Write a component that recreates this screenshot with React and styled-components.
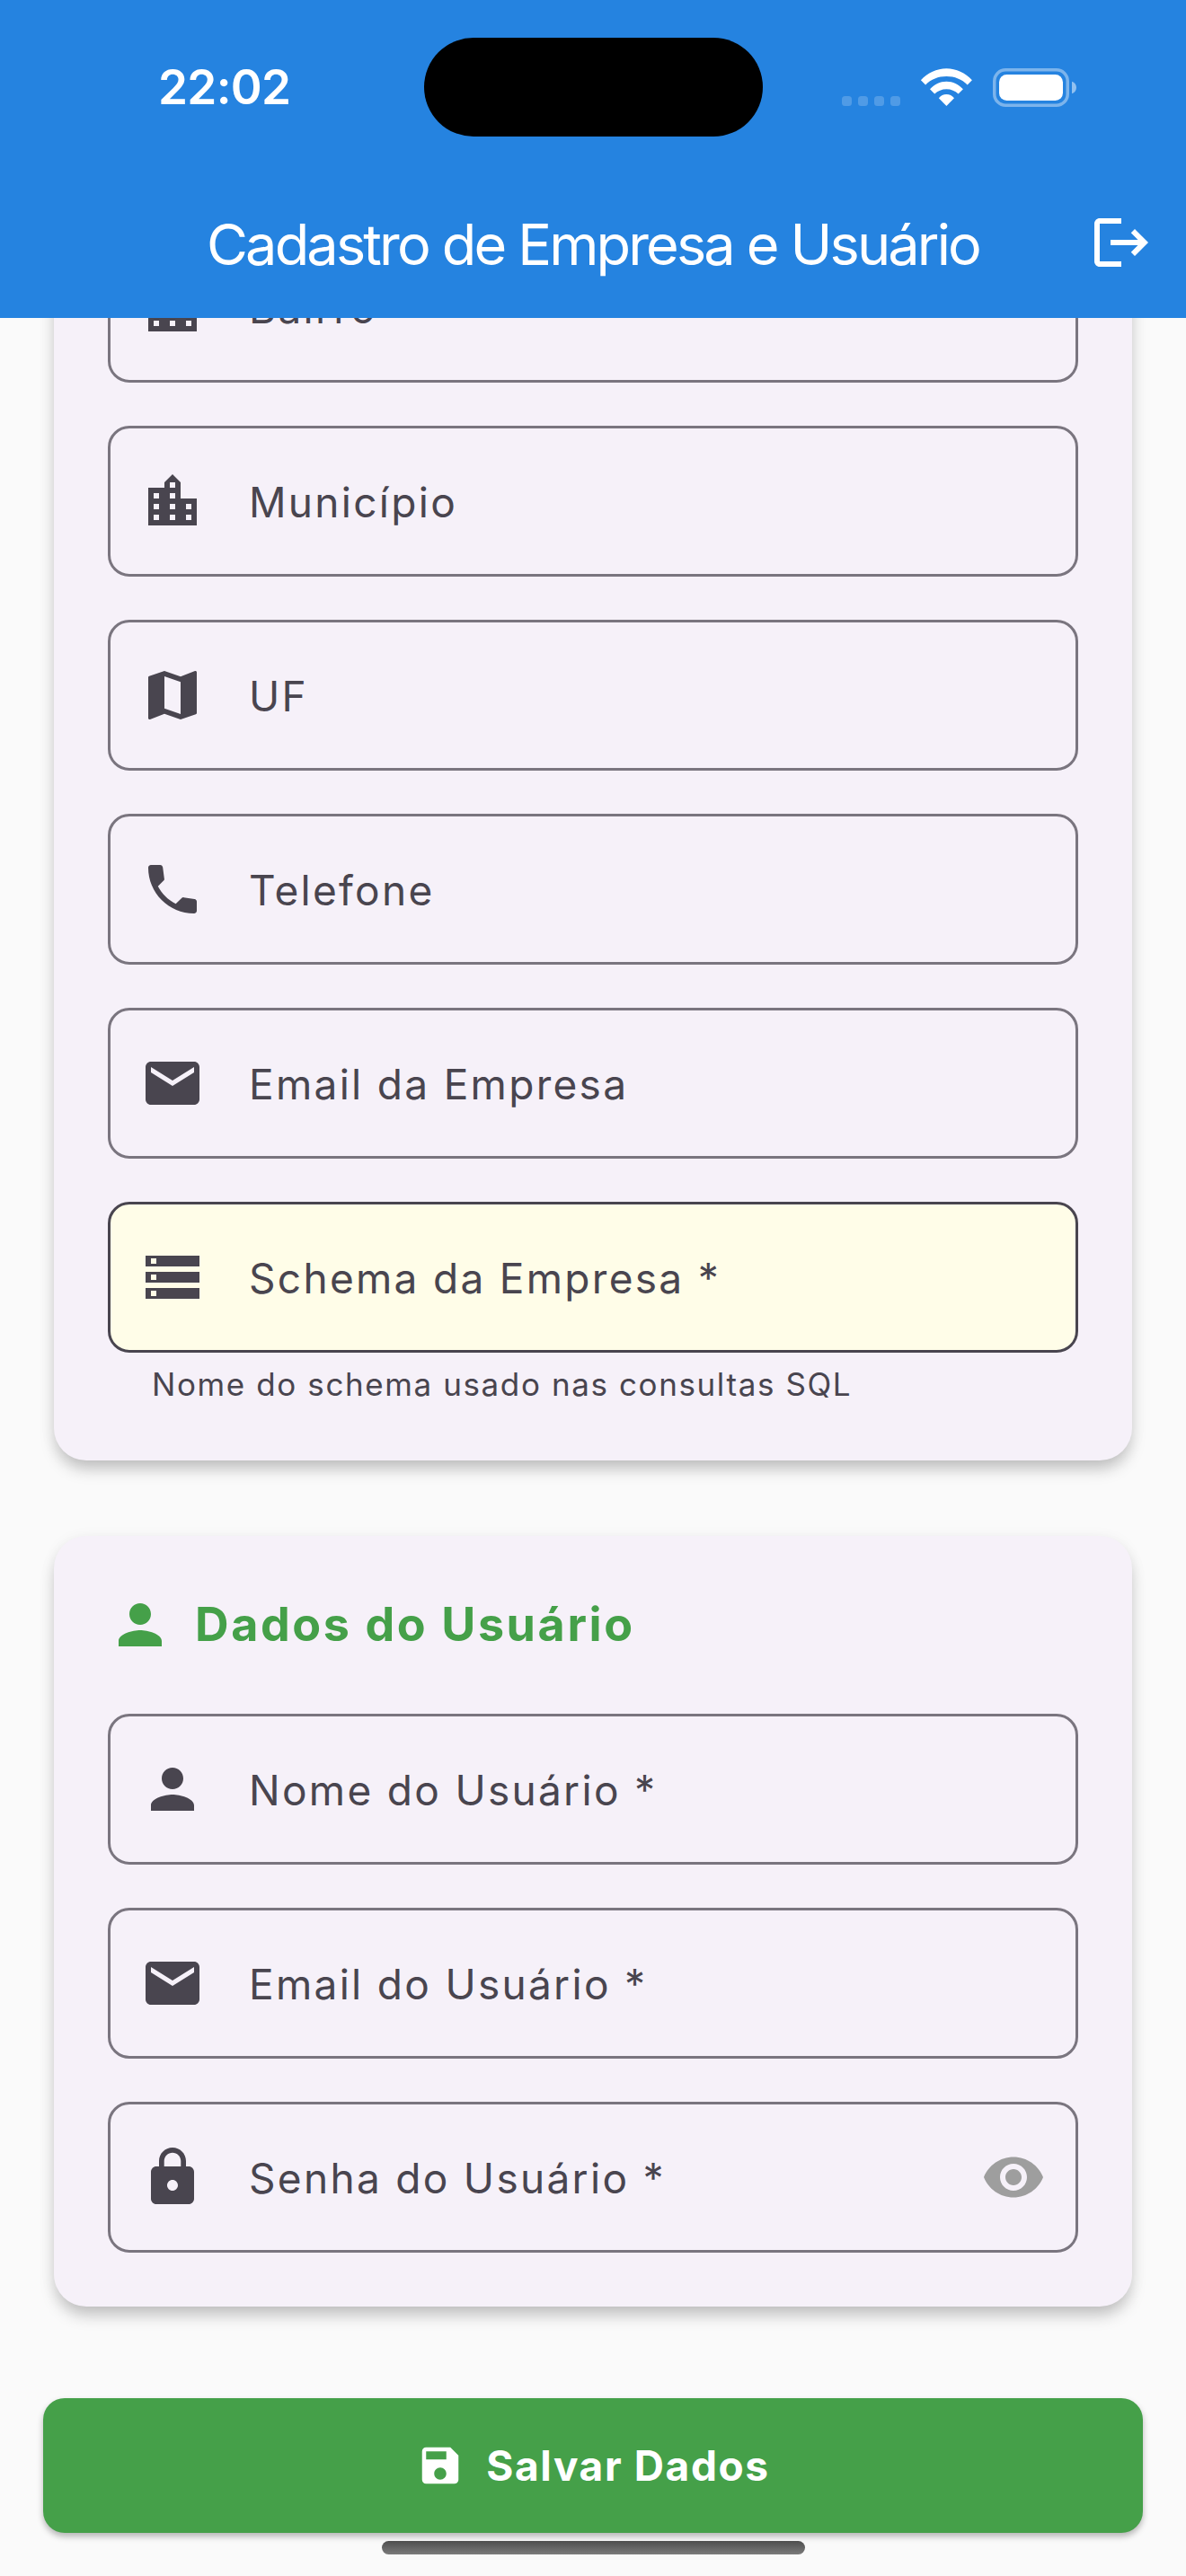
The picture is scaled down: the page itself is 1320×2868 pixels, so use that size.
import React from "react";
import styled, { createGlobalStyle } from "styled-components";

const GlobalStyle = createGlobalStyle`
  *, *::before, *::after { box-sizing: border-box; }
  html, body { margin: 0; padding: 0; }
  body {
    background: #fafafa;
    font-family: Inter, Roboto, "Liberation Sans", sans-serif;
    -webkit-font-smoothing: antialiased;
  }
`;

const Screen = styled.div`
  position: relative;
  width: 1320px;
  height: 2868px;
  display: flex;
  flex-direction: column;
  overflow: hidden;
  background: #fafafa;
`;

const Header = styled.header`
  flex: none;
  height: 354px;
  display: flex;
  flex-direction: column;
  background: #2583e0;
  color: #fff;
`;

const StatusBar = styled.div`
  height: 186px;
  padding: 8px 121px 0 176px;
  display: flex;
  align-items: center;
  justify-content: space-between;
`;

const Clock = styled.span`
  font-size: 53px;
  line-height: 60px;
  font-weight: 600;
  letter-spacing: -0.7px;
`;

const Island = styled.div`
  position: absolute;
  top: 42px;
  left: 472px;
  width: 377px;
  height: 110px;
  border-radius: 55px;
  background: #000;
`;

const StatusIcons = styled.div`
  display: flex;
  align-items: flex-end;
  height: 43px;
`;

const SignalDots = styled.div`
  display: flex;
  gap: 7px;
  margin: 0 22px 1px 0;
`;

const Dot = styled.i`
  width: 11px;
  height: 11px;
  border-radius: 3.5px;
  background: rgba(255, 255, 255, 0.2);
`;

const WifiGlyph = styled.svg`
  width: 59px;
  height: 43px;
  margin-right: 22px;
`;

const BatteryGlyph = styled.svg`
  width: 94px;
  height: 43px;
`;

const AppBar = styled.div`
  height: 168px;
  padding: 0 36px;
  display: grid;
  grid-template-columns: 72px 1fr 72px;
  align-items: center;
`;

const AppTitle = styled.h1`
  grid-column: 2;
  margin: 0;
  padding-top: 3px;
  text-align: center;
  white-space: nowrap;
  font-size: 63px;
  line-height: 84px;
  font-weight: 400;
  letter-spacing: -2.85px;
`;

const Glyph = styled.svg`
  flex: none;
  display: block;
  width: ${(p) => p.$size || 72}px;
  height: ${(p) => p.$size || 72}px;
  fill: ${(p) => p.$color || "currentColor"};
`;

const FormViewport = styled.main`
  flex: none;
  height: 2286px;
  padding: 0 60px 72px;
  display: flex;
  flex-direction: column;
  justify-content: flex-end;
  gap: 84px;
  overflow: hidden;
`;

const Card = styled.section`
  flex: none;
  padding: 60px;
  display: flex;
  flex-direction: column;
  gap: 48px;
  border-radius: 36px;
  background: #f6f1f9;
  box-shadow: 0 12px 18px -3px rgba(0, 0, 0, 0.22), 0 3px 18px rgba(0, 0, 0, 0.06);
`;

const CardHeading = styled.div`
  height: 78px;
  margin-bottom: 12px;
  display: flex;
  align-items: center;
  gap: 25px;
  color: #45a049;
`;

const CardTitle = styled.h2`
  margin: 0;
  font-size: 52px;
  line-height: 66px;
  font-weight: 700;
  white-space: nowrap;
  letter-spacing: 2.6px;
`;

const FieldBox = styled.label`
  height: 168px;
  padding: 0 33px;
  display: flex;
  align-items: center;
  border: 3px solid ${(p) => (p.$active ? "#49454f" : "#7a757f")};
  border-radius: 24px;
  background: ${(p) => (p.$active ? "#fffde8" : "transparent")};
  color: #49454f;
`;

const FieldLabel = styled.span`
  flex: 1;
  padding: 2px 0 0 49px;
  font-size: 46px;
  line-height: 60px;
  white-space: nowrap;
  letter-spacing: 2.3px;
`;

const FieldGroup = styled.div`
  height: 228px;
`;

const Helper = styled.p`
  margin: 0;
  padding: 13px 49px 0;
  color: #49454f;
  font-size: 35px;
  line-height: 44px;
  letter-spacing: 1.6px;
`;

const SaveDock = styled.footer`
  flex: 1;
  padding: 30px 48px 0;
  display: flex;
  flex-direction: column;
  align-items: center;
`;

const SaveButton = styled.button`
  width: 100%;
  height: 150px;
  padding: 0;
  display: flex;
  align-items: center;
  justify-content: center;
  gap: 24px;
  border: 0;
  border-radius: 24px;
  background: #45a049;
  color: #fff;
  font: 700 46px/60px Inter, Roboto, "Liberation Sans", sans-serif;
  letter-spacing: 1.6px;
  box-shadow: 0 4px 7px rgba(0, 0, 0, 0.28);
`;

const HomeIndicator = styled.div`
  width: 471px;
  height: 15px;
  margin-top: 9px;
  border-radius: 8px;
  background: linear-gradient(#4e4e4e, #7b7b7b);
`;

const paths = {
  city: "M15 11V5l-3-3-3 3v2H3v14h18V11h-6zm-8 8H5v-2h2v2zm0-4H5v-2h2v2zm0-4H5V9h2v2zm6 8h-2v-2h2v2zm0-4h-2v-2h2v2zm0-4h-2V9h2v2zm0-4h-2V5h2v2zm6 12h-2v-2h2v2zm0-4h-2v-2h2v2z",
  map: "M20.5 3l-.16.03L15 5.1 9 3 3.36 4.9c-.21.07-.36.25-.36.48V20.5c0 .28.22.5.5.5l.16-.03L9 18.9l6 2.1 5.64-1.9c.21-.07.36-.25.36-.48V3.5c0-.28-.22-.5-.5-.5zM15 19l-6-2.11V5l6 2.11V19z",
  phone: "M4 3C3.450 3 3 3.450 3 4 3 13.390 10.610 21 20 21c.550 0 1-.450 1-1v-3.400c0-.500-.350-.900-.850-.950L16.200 15.050c-.350-.050-.550 0-.750.200L13.200 17.400C10.400 15.950 8.050 13.700 6.600 10.900L8.750 8.750c.200-.200.250-.400.200-.700L8.400 3.900C8.330 3.400 7.950 3 7.400 3z",
  mail: "M20 4H4c-1.1 0-2 .9-2 2v12c0 1.1.9 2 2 2h16c1.1 0 2-.9 2-2V6c0-1.1-.9-2-2-2zm0 4l-8 5-8-5V6l8 5 8-5v2z",
  storage: "M2 20h20v-4H2v4zm2-3h2v2H4v-2zM2 4v4h20V4H2zm4 3H4V5h2v2zm-4 7h20v-4H2v4zm2-3h2v2H4v-2z",
  person: "M12 12c2.21 0 4-1.79 4-4s-1.79-4-4-4-4 1.79-4 4 1.79 4 4 4zm0 2c-2.67 0-8 1.34-8 4v2h16v-2c0-2.66-5.33-4-8-4z",
  lock: "M18 8h-1V6c0-2.76-2.24-5-5-5S7 3.24 7 6v2H6c-1.1 0-2 .9-2 2v10c0 1.1.9 2 2 2h12c1.1 0 2-.9 2-2V10c0-1.1-.9-2-2-2zm-6 9c-1.1 0-2-.9-2-2s.9-2 2-2 2 .9 2 2-.9 2-2 2zm3.1-9H8.9V6c0-1.71 1.39-3.1 3.1-3.1 1.71 0 3.1 1.39 3.1 3.1v2z",
  eye: "M12 4.5C7 4.5 2.73 7.61 1 12c1.73 4.39 6 7.5 11 7.5s9.27-3.11 11-7.5c-1.73-4.39-6-7.5-11-7.5zM12 17c-2.76 0-5-2.24-5-5s2.24-5 5-5 5 2.24 5 5-2.24 5-5 5zm0-8c-1.66 0-3 1.34-3 3s1.34 3 3 3 3-1.34 3-3-1.34-3-3-3z",
  save: "M17 3H5c-1.11 0-2 .9-2 2v14c0 1.1.89 2 2 2h14c1.1 0 2-.9 2-2V7l-4-4zm-5 16c-1.66 0-3-1.34-3-3s1.34-3 3-3 3 1.34 3 3-1.34 3-3 3zm3-10H5V5h10v4z",
  logout: "M17 7l-1.41 1.41L18.17 11H8v2h10.17l-2.58 2.58L17 17l5-5zM4 5h8V3H4c-1.1 0-2 .9-2 2v14c0 1.1.9 2 2 2h8v-2H4V5z",
};

const Icon = ({ name, size, color }) => (
  <Glyph viewBox="0 0 24 24" $size={size} $color={color} aria-hidden="true">
    <path d={paths[name]} />
  </Glyph>
);

const Field = ({ icon, label, active, trailing }) => (
  <FieldBox $active={active}>
    <Icon name={icon} />
    <FieldLabel>{label}</FieldLabel>
    {trailing && <Icon name={trailing} color="#9e9e9e" />}
  </FieldBox>
);

const Wifi = () => (
  <WifiGlyph viewBox="0 0 59 43" fill="#fff">
    <path d="M.9 13.200C8.500 5 18.500.2 29.400.2S50.300 5 57.900 13.200L52.700 18.400C46.500 12.300 38.500 9 29.400 9S12.300 12.300 6.100 18.400z" />
    <path d="M11 23.300C15.800 18 22.300 14.700 29.400 14.700S43 18 47.900 23.300L42.600 28.600C39 25.200 34.500 23.300 29.400 23.300S19.800 25.200 16.200 28.600z" />
    <path d="M20.800 33.200C23 30.400 26 28.900 29.400 28.900S35.800 30.400 38 33.200L29.400 42z" />
  </WifiGlyph>
);

const Battery = () => (
  <BatteryGlyph viewBox="0 0 94 43">
    <rect x="1.75" y="1.75" width="81.5" height="39.5" rx="12.5" fill="none" stroke="#fff" strokeOpacity="0.4" strokeWidth="3.500" />
    <rect x="7" y="7" width="71" height="29" rx="8.500" fill="#fff" />
    <path d="M88 14.800c3 .8 5 3.500 5 6.700s-2 5.900-5 6.700z" fill="#fff" fillOpacity="0.500" />
  </BatteryGlyph>
);

export default function App() {
  return (
    <>
      <GlobalStyle />
      <Screen>
        <Header>
          <StatusBar>
            <Clock>22:02</Clock>
            <StatusIcons>
              <SignalDots>
                <Dot />
                <Dot />
                <Dot />
                <Dot />
              </SignalDots>
              <Wifi />
              <Battery />
            </StatusIcons>
          </StatusBar>
          <Island />
          <AppBar>
            <AppTitle>Cadastro de Empresa e Usuário</AppTitle>
            <Icon name="logout" />
          </AppBar>
        </Header>

        <FormViewport>
          <Card>
            <Field icon="city" label="Bairro" />
            <Field icon="city" label="Município" />
            <Field icon="map" label="UF" />
            <Field icon="phone" label="Telefone" />
            <Field icon="mail" label="Email da Empresa" />
            <FieldGroup>
              <Field icon="storage" label="Schema da Empresa *" active />
              <Helper>Nome do schema usado nas consultas SQL</Helper>
            </FieldGroup>
          </Card>

          <Card>
            <CardHeading>
              <Icon name="person" />
              <CardTitle>Dados do Usuário</CardTitle>
            </CardHeading>
            <Field icon="person" label="Nome do Usuário *" />
            <Field icon="mail" label="Email do Usuário *" />
            <Field icon="lock" label="Senha do Usuário *" trailing="eye" />
          </Card>
        </FormViewport>

        <SaveDock>
          <SaveButton>
            <Icon name="save" size={54} />
            Salvar Dados
          </SaveButton>
          <HomeIndicator />
        </SaveDock>
      </Screen>
    </>
  );
}
